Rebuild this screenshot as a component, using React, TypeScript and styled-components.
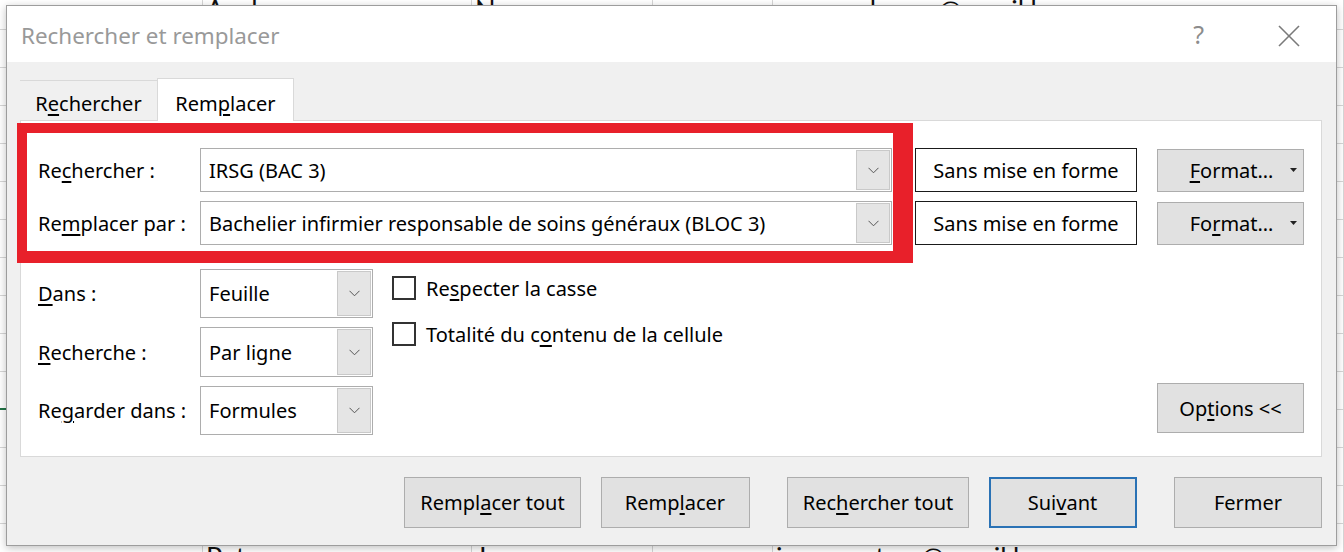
import React from "react";
import styled, { createGlobalStyle } from "styled-components";

const UI_FONT = `"Noto Sans", "Open Sans", "Liberation Sans", sans-serif`;

const GlobalStyle = createGlobalStyle`
  html, body { margin: 0; padding: 0; background: #fff; }
  body { font-family: ${UI_FONT}; overflow: hidden; }
  u { text-decoration-thickness: 2px; text-underline-offset: 3px; }
`;

const Screen = styled.div`
  position: relative;
  width: 1344px;
  height: 552px;
  overflow: hidden;
  background: #fff;
`;

// feuille excel derrière la boîte de dialogue
const Sheet = styled.div`
  display: grid;
  grid-template-columns: 203px 269px 181px 120px 571px;
  grid-template-rows: 30px;
  grid-auto-rows: 38px;
`;

const Cell = styled.div<{ $selected?: boolean }>`
  box-sizing: border-box;
  border-right: 1px solid #d6d6d6;
  border-bottom: ${(p) => (p.$selected ? "2px solid #217346" : "1px solid #d6d6d6")};
  padding-left: 3px;
  overflow: hidden;
  white-space: nowrap;
`;

const CellText = styled.span<{ $shift: number }>`
  display: block;
  font-family: Lato, "Open Sans", sans-serif;
  font-size: 27px;
  line-height: 38px;
  color: #111;
  transform: translateY(${(p) => p.$shift}px);
`;

const Dialog = styled.div`
  position: absolute;
  left: 6px;
  top: 5px;
  width: 1331px;
  height: 541px;
  box-sizing: border-box;
  border: 1px solid #9d9d9d;
  box-shadow: 0 2px 8px rgba(0, 0, 0, 0.25);
  display: flex;
  flex-direction: column;
  background: #f0f0f0;
`;

const TitleBar = styled.div`
  height: 56px;
  background: #fff;
  display: flex;
  align-items: center;
  padding: 3px 36px 0 14px;
  box-sizing: border-box;
`;

const Title = styled.div`
  flex: 1;
  font-size: 22.4px;
  color: #999;
`;

const HelpGlyph = styled.span`
  font-size: 25px;
  color: #8c8c8c;
  margin-right: 74px;
  margin-top: -4px;
`;

const Body = styled.div`
  flex: 1;
  display: flex;
  flex-direction: column;
  padding: 16px 14px 0 13px;
`;

const TabList = styled.div`
  display: flex;
  align-items: flex-end;
  height: 42px;
`;

const Tab = styled.div<{ $active?: boolean }>`
  position: relative;
  z-index: 1;
  width: 137px;
  box-sizing: border-box;
  display: flex;
  align-items: center;
  justify-content: center;
  padding-top: 6px;
  font-size: 20px;
  color: #000;
  height: ${(p) => (p.$active ? "43px" : "40px")};
  margin-bottom: ${(p) => (p.$active ? "-1px" : "0")};
  background: ${(p) => (p.$active ? "#fff" : "transparent")};
  border-top: 1px solid #d9d9d9;
  border-left: ${(p) => (p.$active ? "1px solid #d9d9d9" : "none")};
  border-right: ${(p) => (p.$active ? "1px solid #d9d9d9" : "none")};
`;

const Panel = styled.div`
  position: relative;
  height: 337px;
  box-sizing: border-box;
  background: #fff;
  border: 1px solid #d9d9d9;
  padding: 27px 17px 0 17px;
`;

const Highlight = styled.div`
  position: absolute;
  left: -4px;
  top: 2px;
  width: 896px;
  height: 140px;
  box-sizing: border-box;
  border-style: solid;
  border-color: #e8202a;
  border-width: 10px 20px 12px 10px;
  pointer-events: none;
`;

const FieldRow = styled.div<{ $gap?: number }>`
  display: flex;
  align-items: center;
  height: 44px;
  margin-top: ${(p) => p.$gap ?? 0}px;
`;

const Label = styled.div`
  width: 162px;
  flex-shrink: 0;
  font-size: 20px;
  color: #000;
  white-space: nowrap;
`;

const Combo = styled.div<{ $width: number }>`
  width: ${(p) => p.$width}px;
  height: 100%;
  box-sizing: border-box;
  border: 1px solid #adadad;
  background: #fff;
  display: flex;
  align-items: center;
  padding: 1px;
`;

const ComboText = styled.div`
  flex: 1;
  padding-left: 7px;
  font-size: 20px;
  color: #000;
  white-space: nowrap;
  overflow: hidden;
`;

const DropButton = styled.div`
  width: 34px;
  height: 100%;
  box-sizing: border-box;
  background: #e5e5e5;
  border: 1px solid #c9c9c9;
  display: flex;
  align-items: center;
  justify-content: center;
`;

const FormatBox = styled.div`
  margin-left: 23px;
  width: 222px;
  height: 44px;
  box-sizing: border-box;
  border: 1px solid #1a1a1a;
  display: flex;
  align-items: center;
  justify-content: center;
  font-size: 20px;
  color: #000;
`;

const Button = styled.div<{ $width: number; $height: number; $primary?: boolean }>`
  width: ${(p) => p.$width}px;
  height: ${(p) => p.$height}px;
  box-sizing: border-box;
  flex-shrink: 0;
  background: #e1e1e1;
  border: ${(p) => (p.$primary ? "2px solid #2a72b5" : "1px solid #adadad")};
  display: flex;
  align-items: center;
  justify-content: center;
  font-size: 20px;
  color: #000;
  white-space: nowrap;
`;

const FormatButton = styled(Button)`
  margin-left: 20px;
  padding: 0 6px 0 15px;
`;

const ButtonLabel = styled.span`
  flex: 1;
  text-align: center;
`;

const OptionsArea = styled.div`
  display: flex;
  margin-top: 24px;
`;

const SelectGrid = styled.div`
  display: grid;
  grid-template-columns: 162px 173px;
  grid-template-rows: 49px 50px 49px;
  row-gap: 9px;
  align-items: center;
`;

const Checks = styled.div`
  display: flex;
  flex-direction: column;
  gap: 22px;
  margin-left: 19px;
  padding-top: 7px;
`;

const CheckRow = styled.label`
  display: flex;
  align-items: center;
  height: 24px;
  font-size: 20px;
  color: #000;
`;

const CheckBox = styled.span`
  width: 24px;
  height: 24px;
  box-sizing: border-box;
  border: 2px solid #333;
  background: #fff;
  margin-right: 10px;
`;

const OptionsButton = styled(Button)`
  margin-left: auto;
  align-self: flex-end;
  margin-bottom: 2px;
`;

const Footer = styled.div`
  display: flex;
  justify-content: flex-end;
  gap: 37.5px;
  margin-top: 20px;
`;

const ButtonGroup = styled.div`
  display: flex;
  gap: 19.5px;
`;

const Chevron = () => (
  <svg width="11" height="7" viewBox="0 0 11 7">
    <polyline points="0.5,0.8 5.5,5.8 10.5,0.8" fill="none" stroke="#555" strokeWidth="1" />
  </svg>
);

const CaretDown = () => (
  <svg width="7" height="4" viewBox="0 0 7 4">
    <polygon points="0,0 7,0 3.5,4" fill="#222" />
  </svg>
);

const CloseIcon = () => (
  <svg width="22" height="22" viewBox="0 0 22 22">
    <line x1="1" y1="1" x2="21" y2="21" stroke="#7a7a7a" strokeWidth="1.6" />
    <line x1="21" y1="1" x2="1" y2="21" stroke="#7a7a7a" strokeWidth="1.6" />
  </svg>
);

const topRow = ["", "Axel", "Nora", "", "nanou.alvarez@email.be"];
const lastRow = ["", "Petrus", "Jeanne", "n", "jeane.petrus@email.be"];

const SheetBackground = () => {
  const rows: string[][] = [topRow];
  for (let i = 0; i < 13; i++) rows.push(["", "", "", "", ""]);
  rows.push(lastRow);
  return (
    <Sheet>
      {rows.map((row, r) =>
        row.map((txt, c) => (
          <Cell key={`${r}-${c}`} $selected={r === 10 && c === 0}>
            {txt && <CellText $shift={r === 0 ? -9 : 14}>{txt}</CellText>}
          </Cell>
        ))
      )}
    </Sheet>
  );
};

const Select = ({ value }: { value: string }) => (
  <Combo $width={173}>
    <ComboText>{value}</ComboText>
    <DropButton>
      <Chevron />
    </DropButton>
  </Combo>
);

export default function App() {
  return (
    <Screen>
      <GlobalStyle />
      <SheetBackground />
      <Dialog>
        <TitleBar>
          <Title>Rechercher et remplacer</Title>
          <HelpGlyph>?</HelpGlyph>
          <CloseIcon />
        </TitleBar>
        <Body>
          <TabList>
            <Tab>
              <span>R<u>e</u>chercher</span>
            </Tab>
            <Tab $active>
              <span>Rem<u>p</u>lacer</span>
            </Tab>
          </TabList>
          <Panel>
            <Highlight />
            <FieldRow>
              <Label>Re<u>c</u>hercher :</Label>
              <Combo $width={692}>
                <ComboText>IRSG (BAC 3)</ComboText>
                <DropButton>
                  <Chevron />
                </DropButton>
              </Combo>
              <FormatBox>Sans mise en forme</FormatBox>
              <FormatButton $width={147} $height={43}>
                <ButtonLabel><u>F</u>ormat…</ButtonLabel>
                <CaretDown />
              </FormatButton>
            </FieldRow>
            <FieldRow $gap={9}>
              <Label>Re<u>m</u>placer par :</Label>
              <Combo $width={692}>
                <ComboText>Bachelier infirmier responsable de soins généraux (BLOC 3)</ComboText>
                <DropButton>
                  <Chevron />
                </DropButton>
              </Combo>
              <FormatBox>Sans mise en forme</FormatBox>
              <FormatButton $width={147} $height={43}>
                <ButtonLabel>Fo<u>r</u>mat…</ButtonLabel>
                <CaretDown />
              </FormatButton>
            </FieldRow>
            <OptionsArea>
              <SelectGrid>
                <Label><u>D</u>ans :</Label>
                <Select value="Feuille" />
                <Label><u>R</u>echerche :</Label>
                <Select value="Par ligne" />
                <Label>Re<u>g</u>arder dans :</Label>
                <Select value="Formules" />
              </SelectGrid>
              <Checks>
                <CheckRow>
                  <CheckBox />
                  <span>Re<u>s</u>pecter la casse</span>
                </CheckRow>
                <CheckRow>
                  <CheckBox />
                  <span>Totalité du c<u>o</u>ntenu de la cellule</span>
                </CheckRow>
              </Checks>
              <OptionsButton $width={147} $height={50}>
                Op<u>t</u>ions &lt;&lt;
              </OptionsButton>
            </OptionsArea>
          </Panel>
          <Footer>
            <ButtonGroup>
              <Button $width={177} $height={51}>Rempl<u>a</u>cer tout</Button>
              <Button $width={149} $height={51}>Remp<u>l</u>acer</Button>
            </ButtonGroup>
            <ButtonGroup>
              <Button $width={182} $height={51}>Rec<u>h</u>ercher tout</Button>
              <Button $width={148} $height={51} $primary>Sui<u>v</u>ant</Button>
            </ButtonGroup>
            <Button $width={148} $height={51}>Fermer</Button>
          </Footer>
        </Body>
      </Dialog>
    </Screen>
  );
}
